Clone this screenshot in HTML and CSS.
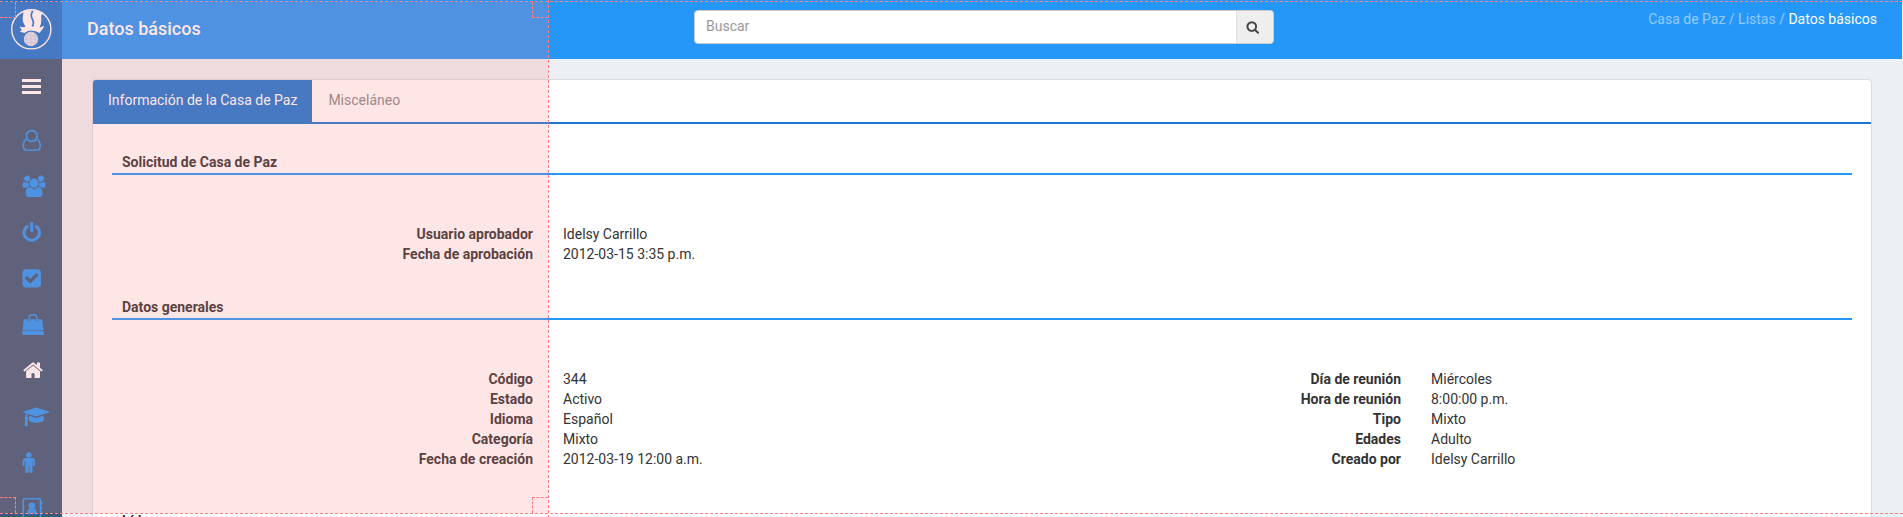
FILE: index.html
```
<!DOCTYPE html>
<html lang="es">
<head>
<meta charset="utf-8">
<title>Datos básicos</title>
<link rel="stylesheet" href="styles.css">
</head>
<body>
<div class="app">
  <aside class="sidebar">
    <div class="logo">
      <svg width="42" height="42" viewBox="0 0 42 42">
        <circle cx="21.300" cy="21.300" r="19.600" fill="none" stroke="#fff" stroke-width="1.400"/>
        <path d="M13.500 3.500Q22 .800 32.500 4.500Q30.300 8 31.300 12Q31.500 16 29.500 19.500Q32 19 34.500 17.500Q33 21.500 29.500 25Q26 22.500 21 22.500Q17 22.700 14.500 25L9.500 23.500L12 22.300L9.500 18.500Q14 20 15.500 18.500Q12 13.500 12.800 9Q13.200 6 13.500 3.500Z" fill="#fff"/>
        <path d="M22.800 3Q20 7 22.300 11Q24.500 15 22.300 18.500" fill="none" stroke="#1976d2" stroke-width="1.700"/>
        <circle cx="21" cy="31" r="7.200" fill="#dfe7f4"/>
        <path d="M14.500 29Q21 25.500 27.500 29M14.300 32Q21 29 27.700 32M15.500 35Q21 32.500 26.500 35M21 24V38M17.500 25Q15.500 31 17.500 37M24.500 25Q26.500 31 24.500 37" fill="none" stroke="#a9bfdf" stroke-width=".5"/>
      </svg>
    </div>
    <div class="toggle"><i></i><i></i><i></i></div>
    <nav class="menu">
      <a><svg width="30" height="22" viewBox="0 0 30 22"><circle cx="9.800" cy="7" r="5.400" fill="none" stroke="currentColor" stroke-width="1.600"/><path d="M5.300 10.200C2.500 10.500 1.300 13 1.300 17C1.300 19.600 2.900 21.200 5 21.200H14.500C16.700 21.200 18.200 19.600 18.200 17C18.200 13 17 10.500 14.300 10.200" fill="none" stroke="currentColor" stroke-width="1.600"/></svg></a>
      <a><svg width="30" height="22" viewBox="0 0 30 22"><path fill="currentColor" transform="translate(-.2 .5) scale(.012)" d="M657 896q-162 5-265 128h-134q-82 0-138-40.500t-56-118.500q0-353 124-353 6 0 43.500 21t97.500 42.500 119 21.500q67 0 133-23-5 37-5 66 0 139 81 256zm1071 637q0 120-73 189.500t-194 69.500h-874q-121 0-194-69.500t-73-189.500q0-53 3.500-103.500t14-109 26.500-108.500 43-97.500 62-81 85.500-53.500 111.500-20q10 0 43 21.500t73 48 107 48 135 21.500 135-21.500 107-48 73-48 43-21.500q61 0 111.500 20t85.500 53.500 62 81 43 97.500 26.500 108.500 14 109 3.500 103.500zm-1024-1277q0 106-75 181t-181 75-181-75-75-181 75-181 181-75 181 75 75 181zm704 384q0 159-112.500 271.500t-271.500 112.500-271.500-112.500-112.500-271.500 112.500-271.500 271.500-112.500 271.500 112.500 112.500 271.500zm576 225q0 78-56 118.500t-138 40.500h-134q-103-123-265-128 81-117 81-256 0-29-5-66 66 23 133 23 59 0 119-21.500t97.500-42.500 43.500-21q124 0 124 353zm-128-609q0 106-75 181t-181 75-181-75-75-181 75-181 181-75 181 75 75 181z"/></svg></a>
      <a><svg width="30" height="22" viewBox="0 0 30 22"><path fill="currentColor" transform="translate(-1 .8) scale(.012)" d="M1664 896q0 156-61 298t-164 245-245 164-298 61-298-61-245-164-164-245-61-298q0-182 80.500-343t226.500-270q43-32 95.500-25t83.500 50q32 42 24.500 94.500t-49.500 84.500q-98 74-151.500 181t-53.500 228q0 104 40.500 198.500t109.500 163.500 163.500 109.500 198.500 40.500 198.500-40.500 163.500-109.500 109.500-163.500 40.500-198.500q0-121-53.500-228t-151.500-181q-42-32-49.500-84.500t24.500-94.500q31-43 84-50t95 25q146 109 226.500 270t80.500 343zm-640-768v640q0 52-38 90t-90 38-90-38-38-90v-640q0-52 38-90t90-38 90 38 38 90z"/></svg></a>
      <a><svg width="30" height="22" viewBox="0 0 30 22"><path fill="currentColor" transform="translate(-1 .6) scale(.012)" d="M813 1299l614-614q19-19 19-45t-19-45l-102-102q-19-19-45-19t-45 19l-467 467-211-211q-19-19-45-19t-45 19l-102 102q-19 19-19 45t19 45l358 358q19 19 45 19t45-19zM1664 416v960q0 119-84.500 203.500t-203.500 84.500h-960q-119 0-203.500-84.500t-84.500-203.500v-960q0-119 84.500-203.500t203.500-84.500h960q119 0 203.500 84.500t84.500 203.500z"/></svg></a>
      <a><svg width="30" height="22" viewBox="0 0 30 22"><path fill="currentColor" d="M1.800 6.300H20.200L21.400 17H.600ZM.500 17.500H21.500L22 22H.300Z"/><path d="M7 8.500V5.500C7 .700 15 .700 15 5.500V8.500" fill="none" stroke="#395a7a" stroke-width="2.600"/><path d="M7 8.500V5.500C7 .600 15 .600 15 5.500V8.500" fill="none" stroke="currentColor" stroke-width="1.500"/></svg></a>
      <a class="active"><svg width="30" height="22" viewBox="0 0 30 22"><path fill="currentColor" transform="translate(.2 .3) scale(.0121)" d="M1472 992v480q0 26-19 45t-45 19h-384v-384h-256v384h-384q-26 0-45-19t-19-45v-480q0-1 .5-3t.5-3l575-474 575 474q1 2 1 6zm223-69l-62 74q-8 9-21 11h-3q-13 0-21-7l-692-577-692 577q-12 8-24 7-13-2-21-11l-62-74q-8-10-7-23.500t11-21.500l719-599q32-26 76-26t76 26l244 204v-195q0-14 9-23t23-9h192q14 0 23 9t9 23v408l219 182q10 8 11 21.500t-7 23.500z"/></svg></a>
      <a><svg width="30" height="22" viewBox="0 0 30 22"><path fill="currentColor" d="M14.200 2.500L27.800 6.700Q28 7 27.600 7.200L14.200 11.500L6.200 8.900Q5.200 9.800 5.100 11.800Q6 12.300 6 13.200Q6 14 5.300 14.500L6 21H2.600L3.300 14.500Q2.600 14 2.600 13.200Q2.600 12.300 3.400 11.800Q3.500 9.500 4.300 8.300L.800 7.200Q.4 7 .8 6.700ZM7 10.600L14.200 12.900L21.700 10.500L22 14.800Q21 17.700 14.400 17.800Q7.800 17.700 6.800 14.800Z"/></svg></a>
      <a><svg width="30" height="22" viewBox="0 0 30 22"><circle cx="6.900" cy="3.900" r="2.700" fill="currentColor"/><path fill="currentColor" d="M3.200 7H10.700Q13 7.200 13 9.500V14.200Q12.900 15 12.100 15Q11.300 15 11.200 14.200V10.300H10.600V21Q10.400 22 9.200 22Q8 22 7.300 21V15.500H6.600V21Q6 22 4.800 22Q3.600 22 3.400 21V10.300H2.600V14.200Q2.500 15 1.700 15Q.8 15 .7 14.200V9.500Q.8 7.200 3.200 7Z"/></svg></a>
      <a><svg width="30" height="22" viewBox="0 0 30 22"><rect x="1.300" y="1.800" width="17.200" height="19.500" rx="1" fill="none" stroke="currentColor" stroke-width="1.600"/><path fill="currentColor" d="M19 4.700H20.300V7.500H19ZM19 9.500H20.300V12.500H19ZM19 14.500H20.300V17.500H19ZM5 17.300Q5 12.300 7.500 11.600Q9.800 13 12.200 11.600Q14.800 12.300 14.800 17.300Z"/><circle cx="9.900" cy="8.700" r="3.300" fill="currentColor"/></svg></a>
    </nav>
  </aside>
  <div class="main">
    <header class="topbar">
      <h1>Datos básicos</h1>
      <div class="search">
        <span class="field">Buscar</span>
        <span class="go"><svg width="13" height="14" viewBox="0 0 1728 1792"><path fill="#444" d="M1216 832q0-185-131.500-316.500t-316.500-131.500-316.500 131.500-131.500 316.500 131.500 316.500 316.500 131.500 316.500-131.500 131.500-316.500zm512 832q0 52-38 90t-90 38q-54 0-90-38l-343-342q-179 124-399 124-143 0-273.500-55.500t-225-150-150-225-55.500-273.500 55.500-273.500 150-225 225-150 273.500-55.500 273.500 55.500 225 150 150 225 55.500 273.500q0 220-124 399l343 343q37 37 37 90z"/></svg></span>
      </div>
      <div class="crumbs">Casa de Paz / Listas / <b>Datos básicos</b></div>
    </header>
    <section class="card">
      <div class="tabs"><a class="tab on">Información de la Casa de Paz</a><a class="tab">Misceláneo</a></div>
      <div class="body">
        <h2>Solicitud de Casa de Paz</h2>
        <div class="data">
          <div class="label">Usuario aprobador<br>Fecha de aprobación</div>
          <div class="value">Idelsy Carrillo<br>2012-03-15 3:35 p.m.</div>
        </div>
        <h2>Datos generales</h2>
        <div class="data general">
          <div class="label">Código<br>Estado<br>Idioma<br>Categoría<br>Fecha de creación</div>
          <div class="value">344<br>Activo<br>Español<br>Mixto<br>2012-03-19 12:00 a.m.</div>
          <div class="label">Día de reunión<br>Hora de reunión<br>Tipo<br>Edades<br>Creado por</div>
          <div class="value">Miércoles<br>8:00:00 p.m.<br>Mixto<br>Adulto<br>Idelsy Carrillo</div>
        </div>
        <h2>Líder</h2>
      </div>
    </section>
  </div>
  <div class="selection"><i class="tl"></i><i class="tr"></i><i class="bl"></i><i class="br"></i></div>
  <div class="guide top"></div>
  <div class="guide bottom"></div>
  <div class="guide side"></div>
</div>
</body>
</html>
```
FILE: styles.css
```
* { box-sizing: border-box; }
body { margin: 0; font: 14px/20px Roboto, sans-serif; color: #333; }
.app { position: relative; display: flex; width: 100%; height: 517px; overflow: hidden; background: #ecf0f4; }
.sidebar { width: 62px; flex: none; background: #395a7a; }
.logo { height: 59px; background: #1976d2; padding: 8px 0 0 10px; }
.logo svg { display: block; }
.toggle { height: 58px; padding: 20px 0 0 22px; display: flex; flex-direction: column; gap: 3px; }
.toggle i { width: 19px; height: 3px; background: #fff; }
.menu { display: flex; flex-direction: column; }
.menu a { flex: none; height: 46px; padding: 12px 0 0 22px; color: #2497f9; }
.menu a.active { color: #fff; }
.menu svg { display: block; }
.main { flex: 1; min-width: 0; }
.topbar { height: 59px; background: #2497f9; display: flex; align-items: flex-start; margin-right: 1px; }
h1 { margin: 0; width: 632px; padding: 18px 0 0 25px; font-size: 18px; line-height: 22px; font-weight: 500; color: #fff; }
.search { margin-top: 10px; display: flex; width: 580px; height: 34px; background: #fff; border: 1px solid #ccc; border-radius: 4px; overflow: hidden; }
.field { flex: 1; padding: 5px 11px; color: #999; }
.go { width: 37px; background: #eee; border-left: 1px solid #ddd; padding: 9px 0 0 9px; }
.go svg { display: block; }
.crumbs { margin: 9px 25px 0 auto; color: rgba(255,255,255,.5); }
.crumbs b { font-weight: 400; color: #fff; }
.card { margin: 20px 31px 0 30px; height: 480px; background: #fff; border: 1px solid #d8dcdf; border-radius: 4px; }
.tabs { display: flex; height: 44px; border-bottom: 2px solid #1976d2; }
.tab { height: 42px; padding: 10px 15px; color: #888; }
.tab.on { height: 44px; margin-right: 1px; background: #1976d2; color: #fff; border-radius: 3px 0 0 0; }
.body { padding: 26px 19px 0; }
h2 { margin: 0; height: 25px; padding: 2px 10px; border-bottom: 2px solid #2497f9; font-size: 14px; line-height: 20px; font-weight: 700; }
.data { display: grid; grid-template-columns: 436px 434px 434px 1fr; padding: 49px 0 31px; }
.data.general { padding-bottom: 40px; }
.label { padding-right: 15px; text-align: right; font-weight: 700; }
.value { padding-left: 15px; }
.selection { position: absolute; left: 0; top: 2px; width: 548px; height: 511px; background: rgba(255,128,128,.2); }
.selection i { position: absolute; width: 16px; height: 16px; border: 0 dashed #ff8080; }
.selection .tl { left: 0; top: 0; border-width: 0 1px 1px 0; }
.selection .tr { right: 0; top: 0; border-width: 0 0 1px 1px; }
.selection .bl { left: 0; bottom: 0; border-width: 1px 1px 0 0; }
.selection .br { right: 0; bottom: 0; border-width: 1px 0 0 1px; }
.guide { position: absolute; }
.top, .bottom { left: 0; right: 0; height: 1px; background: repeating-linear-gradient(90deg, #ff8080 0 3px, transparent 3px 5px); }
.top { top: 1px; }
.bottom { top: 513px; }
.side { left: 548px; top: 0; bottom: 0; width: 1px; background: repeating-linear-gradient(#ff8080 0 3px, transparent 3px 5px); }
```
